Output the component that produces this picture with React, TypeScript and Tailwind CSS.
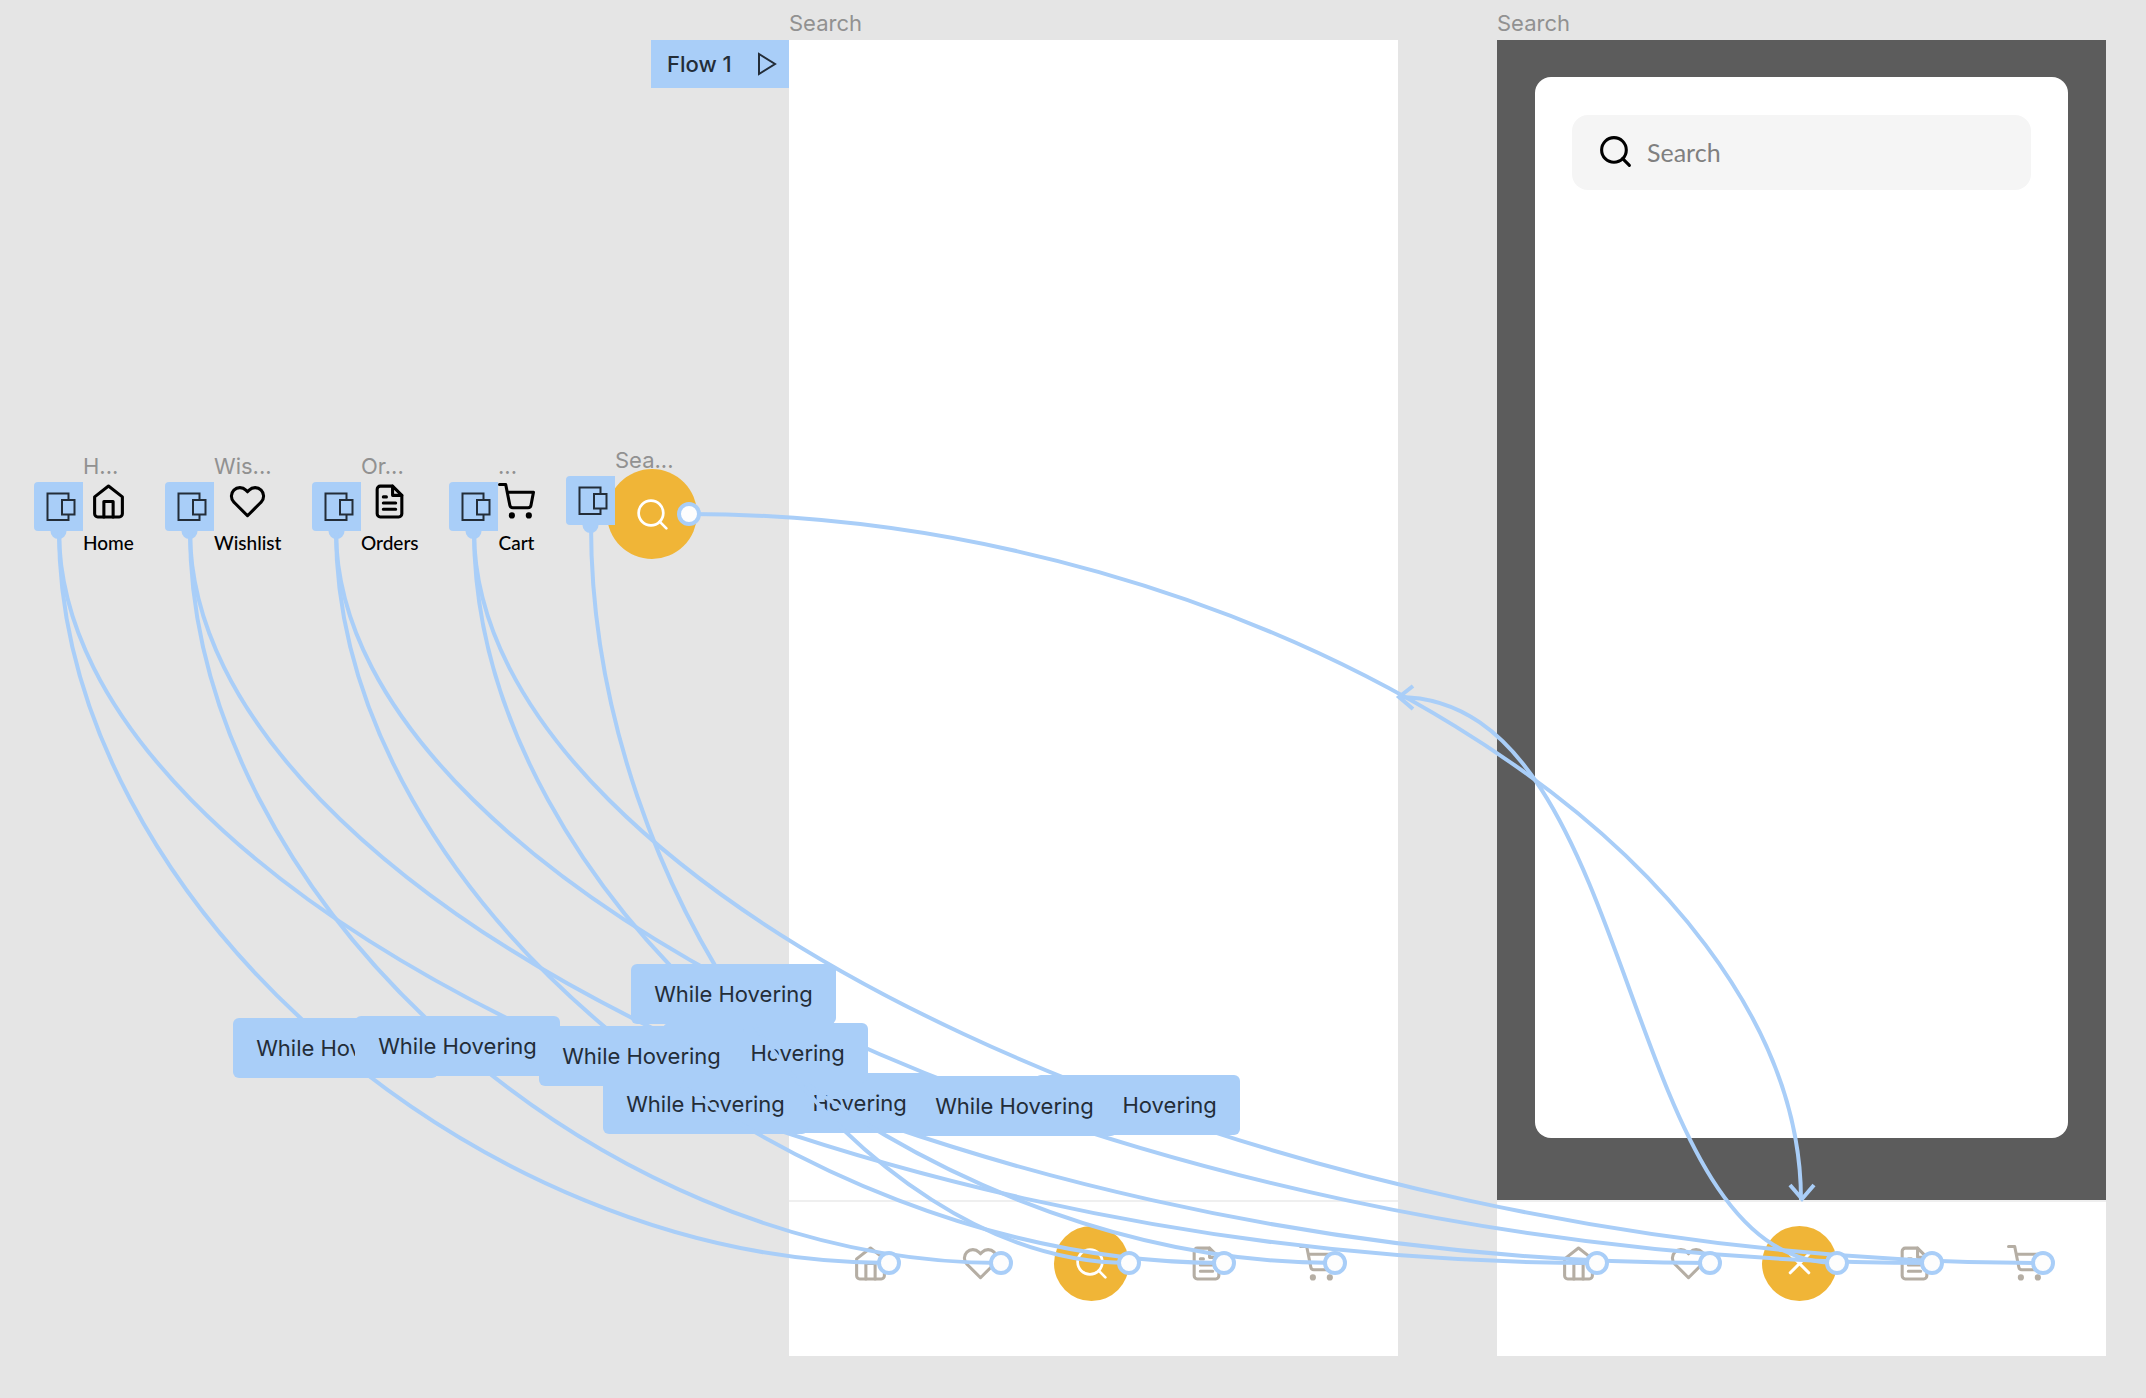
import type { ReactNode } from "react";

type IconProps = { className?: string; strokeWidth?: number };

function Icon({ className = "", strokeWidth = 2, children }: IconProps & { children: ReactNode }) {
  return (
    <svg
      viewBox="0 0 24 24"
      fill="none"
      stroke="currentColor"
      strokeWidth={strokeWidth}
      strokeLinecap="round"
      strokeLinejoin="round"
      aria-hidden="true"
      className={`size-[37px] shrink-0 ${className}`}
    >
      {children}
    </svg>
  );
}

const HomeIcon = (p: IconProps) => (
  <Icon {...p}>
    <path d="M3 9l9-7 9 7v11a2 2 0 0 1-2 2H5a2 2 0 0 1-2-2z" />
    <path d="M9 22V12h6v10" />
  </Icon>
);
const HeartIcon = (p: IconProps) => (
  <Icon {...p}>
    <path d="M20.84 4.61a5.5 5.5 0 0 0-7.78 0L12 5.67l-1.06-1.06a5.5 5.5 0 0 0-7.78 7.78l1.06 1.06L12 21.23l7.78-7.78 1.06-1.06a5.5 5.5 0 0 0 0-7.78z" />
  </Icon>
);
const FileIcon = (p: IconProps) => (
  <Icon {...p}>
    <path d="M14 2H6a2 2 0 0 0-2 2v16a2 2 0 0 0 2 2h12a2 2 0 0 0 2-2V8z" />
    <path d="M14 2v6h6M16 13H8M16 17H8M10 9H8" />
  </Icon>
);
const CartIcon = (p: IconProps) => (
  <Icon {...p}>
    <circle cx="9" cy="21" r="1" />
    <circle cx="20" cy="21" r="1" />
    <path d="M1 1h4l2.68 13.39a2 2 0 0 0 2 1.61h9.72a2 2 0 0 0 2-1.61L23 6H6" />
  </Icon>
);
const SearchIcon = (p: IconProps) => (
  <Icon {...p}>
    <circle cx="11" cy="11" r="8" />
    <path d="M21 21l-4.35-4.35" />
  </Icon>
);
const CloseIcon = (p: IconProps) => (
  <Icon {...p}>
    <path d="M18 6L6 18M6 6l12 12" />
  </Icon>
);

function VariantBadge({ className = "" }: { className?: string }) {
  return (
    <svg viewBox="0 0 49 57" aria-hidden="true" className={`h-[57px] w-[49px] shrink-0 ${className}`}>
      <path d="M4 0H49V49H4a4 4 0 0 1-4-4V4a4 4 0 0 1 4-4z" fill="#a9cef8" />
      <circle cx="24.5" cy="49" r="8" fill="#a9cef8" />
      <g fill="#a9cef8" stroke="#232d38" strokeWidth="2">
        <rect x="13.5" y="11.5" width="21" height="26.5" />
        <rect x="28" y="18" width="12.5" height="14.5" />
      </g>
    </svg>
  );
}

const nodes = [
  { place: "left-[34px]", tag: "H...", caption: "Home", Glyph: HomeIcon },
  { place: "left-[165px]", tag: "Wis...", caption: "Wishlist", Glyph: HeartIcon },
  { place: "left-[312px]", tag: "Or...", caption: "Orders", Glyph: FileIcon },
  { place: "left-[449px]", tag: "...", caption: "Cart", Glyph: CartIcon },
];

function BottomNav({ action }: { action: "search" | "close" }) {
  const item = "flex w-[74px] items-center justify-center text-[#b5aea4]";
  return (
    <nav className="flex h-[156px] items-start justify-between border-t-2 border-[#efefef] bg-white px-11 pt-6">
      <button type="button" aria-label="Home" className={`${item} h-[75px]`}>
        <HomeIcon />
      </button>
      <button type="button" aria-label="Wishlist" className={`${item} h-[75px]`}>
        <HeartIcon />
      </button>
      <button
        type="button"
        aria-label={action === "search" ? "Search" : "Close"}
        className="mr-1 flex size-[75px] items-center justify-center rounded-full bg-[#f0b537] text-white"
      >
        {action === "search" ? <SearchIcon strokeWidth={1.75} /> : <CloseIcon />}
      </button>
      <button type="button" aria-label="Orders" className={`${item} h-[75px]`}>
        <FileIcon />
      </button>
      <button type="button" aria-label="Cart" className={`${item} h-[75px]`}>
        <CartIcon />
      </button>
    </nav>
  );
}

// Drawn back to front: later connectors cover the labels of earlier ones.
const connectors = [
  { d: "M474 531C474 897 1258 1263 2043 1263", label: "left-[1035px] top-[1075px]" },
  { d: "M336 531C336 897 1134 1263 1932 1263", label: "left-[912px] top-[1076px]" },
  { d: "M190 531C190 897 950 1263 1710 1263", label: "left-[725px] top-[1073px]" },
  { d: "M59 531C59 897 828 1263 1597 1263", label: "left-[603px] top-[1074px]" },
  { d: "M474 531C474 897 904 1263 1335 1263", label: "left-[663px] top-[1023px]" },
  { d: "M336 531C336 897 780 1263 1224 1263", label: "left-[539px] top-[1026px]" },
  { d: "M59 531C59 897 474 1263 889 1263", label: "left-[233px] top-[1018px]" },
  { d: "M190 531C190 897 595 1263 1001 1263", label: "left-[355px] top-[1016px]" },
  { d: "M591 525C591 894 860 1263 1129 1263", label: "left-[631px] top-[964px]" },
];

const handles = [
  [689, 514],
  [889, 1263],
  [1001, 1263],
  [1129, 1263],
  [1224, 1263],
  [1335, 1263],
  [1597, 1263],
  [1710, 1263],
  [1837, 1263],
  [1932, 1263],
  [2043, 1263],
];

function Layer({ children }: { children: ReactNode }) {
  return (
    <svg
      aria-hidden="true"
      fill="none"
      stroke="#a9cef8"
      strokeWidth="4"
      className="pointer-events-none absolute inset-0 size-full"
    >
      {children}
    </svg>
  );
}

export default function App() {
  return (
    <main className="relative min-h-screen w-full overflow-hidden bg-[#e5e5e5] font-['Inter',sans-serif] text-[22px] leading-7">
      <section className="absolute left-[789px] top-[9px] w-[609px]">
        <h2 className="mb-[3px] text-[#919191]">Search</h2>
        <div className="bg-white">
          <div className="h-[1160px]" />
          <BottomNav action="search" />
        </div>
      </section>

      <section className="absolute left-[1497px] top-[9px] w-[609px]">
        <h2 className="mb-[3px] text-[#919191]">Search</h2>
        <div className="h-[1160px] bg-[#5c5c5c] px-[38px] pb-[62px] pt-[37px]">
          <div className="h-full rounded-2xl bg-white px-[37px] py-[38px]">
            <label className="flex h-[75px] items-center gap-[13px] rounded-2xl bg-[#f5f5f5] pb-0.5 pl-[25px] pr-6">
              <SearchIcon className="text-black" />
              <input
                type="text"
                aria-label="Search"
                placeholder="Search"
                className="w-full min-w-0 bg-transparent font-['Lato',sans-serif] text-[25px] outline-none placeholder:text-[#808080]"
              />
            </label>
          </div>
        </div>
        <BottomNav action="close" />
      </section>

      <button
        type="button"
        className="absolute left-[651px] top-10 flex h-12 w-[138px] items-center justify-between bg-[#a9cef8] pl-4 pr-[11px] font-medium text-[#232d38]"
      >
        Flow 1
        <svg viewBox="0 0 22 26" fill="none" stroke="currentColor" strokeWidth="2" aria-hidden="true" className="h-[26px] w-[22px]">
          <path d="M3 3V23L19 13z" />
        </svg>
      </button>

      {nodes.map(({ place, tag, caption, Glyph }) => (
        <div key={caption} className={`absolute top-[452px] ${place}`}>
          <div className="mb-0.5 pl-[49px] text-[#919191]">{tag}</div>
          <div className="flex items-start">
            <VariantBadge />
            <div className="flex flex-col items-center gap-[11px] pt-px text-black">
              <Glyph />
              <span className="font-['Lato',sans-serif] text-[19px] leading-6 font-medium">{caption}</span>
            </div>
          </div>
        </div>
      ))}

      <div className="absolute left-[607px] top-[469px] flex size-[90px] items-center justify-center rounded-full bg-[#f0b537] text-white">
        <SearchIcon strokeWidth={1.75} />
      </div>
      <div className="absolute left-[615px] top-[446px] text-[#919191]">Sea...</div>
      <VariantBadge className="absolute left-[566px] top-[476px]" />

      {connectors.map(({ d, label }) => (
        <div key={d}>
          <Layer>
            <path d={d} />
          </Layer>
          <div
            className={`absolute flex h-[60px] w-[205px] items-center justify-center rounded-md bg-[#a9cef8] whitespace-nowrap text-[#232d38] ${label}`}
          >
            While Hovering
          </div>
        </div>
      ))}

      <Layer>
        <path d="M689 514C1249 514 1801 851 1801 1200" />
        <path d="M1790 1185L1802 1199L1814 1185" />
        <path d="M1837 1263C1615 1263 1643 697 1398 697" />
        <path d="M1413 686L1399 697L1413 709" />
        {handles.map(([x, y]) => (
          <circle key={`${x}-${y}`} cx={x} cy={y} r="10" fill="#fdfdfd" />
        ))}
      </Layer>
    </main>
  );
}
